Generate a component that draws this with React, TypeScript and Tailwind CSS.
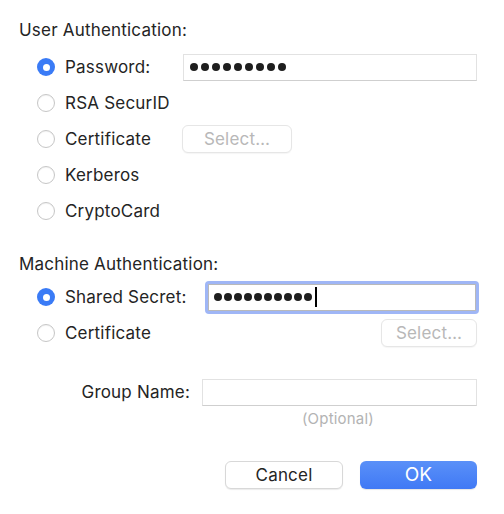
import React from "react";

function Radio({ checked }: { checked?: boolean }) {
  return checked ? (
    <span className="flex h-[18px] w-[18px] shrink-0 items-center justify-center rounded-full bg-[#3a7bf6]">
      <span className="h-[7px] w-[7px] rounded-full bg-white" />
    </span>
  ) : (
    <span className="h-[18px] w-[18px] shrink-0 rounded-full border border-[#c6c6c6] bg-white shadow-[inset_0_1px_1px_rgba(0,0,0,0.05)]" />
  );
}

function Dots({ n, tight }: { n: number; tight?: boolean }) {
  return (
    <span className={"flex items-center " + (tight ? "gap-[2px]" : "gap-[3px]")}>
      {Array.from({ length: n }).map((_, i) => (
        <span key={i} className="h-[8px] w-[8px] rounded-full bg-[#1e1e1e]" />
      ))}
    </span>
  );
}

function SelectBtn({ className = "" }: { className?: string }) {
  return (
    <div
      className={
        "flex h-[28px] items-center justify-center rounded-[6px] border border-[#e6e6e6] bg-white pt-[1px] text-[17px] text-[#b8b8b8] shadow-[0_1px_1px_rgba(0,0,0,0.04)] " +
        className
      }
    >
      Select…
    </div>
  );
}

export default function App() {
  return (
    <div
      className="h-[514px] w-[504px] bg-white text-[17px] tracking-[0.2px] text-[#242424]"
      style={{ fontFamily: "Inter, 'Liberation Sans', sans-serif" }}
    >
      <div className="flex flex-col pl-[19px] pr-[27px] pt-[20px]">
        <div className="h-[20px] leading-[20px]">User Authentication:</div>

        <div className="mt-[9px] flex flex-col pl-[18px]">
          <div className="flex h-[36px] items-center">
            <Radio checked />
            <span className="ml-[10px] w-[118px] pt-[1px]">Password:</span>
            <div className="flex h-[27px] flex-1 items-center border border-[#e2e2e2] border-b-[#cfcfcf] bg-white pl-[6px]">
              <Dots n={9} />
            </div>
          </div>
          <div className="flex h-[36px] items-center">
            <Radio />
            <span className="ml-[10px] pt-[1px]">RSA SecurID</span>
          </div>
          <div className="flex h-[36px] items-center">
            <Radio />
            <span className="ml-[10px] w-[117px] pt-[1px]">Certificate</span>
            <SelectBtn className="w-[110px]" />
          </div>
          <div className="flex h-[36px] items-center">
            <Radio />
            <span className="ml-[10px] pt-[1px]">Kerberos</span>
          </div>
          <div className="flex h-[36px] items-center">
            <Radio />
            <span className="ml-[10px] pt-[1px]">CryptoCard</span>
          </div>
        </div>

        <div className="mt-[25px] h-[20px] leading-[20px]">Machine Authentication:</div>

        <div className="mt-[5px] flex flex-col pl-[18px]">
          <div className="flex h-[36px] items-center">
            <Radio checked />
            <span className="ml-[10px] w-[140px] pt-[1px]">Shared Secret:</span>
            <div className="-mr-[2px] flex h-[33px] flex-1 items-center rounded-[4px] bg-[#9fb6f6] p-[3px]">
              <div className="flex h-full w-full items-center border border-[#b9b9b9] bg-white pl-[5px]">
                <Dots n={10} tight />
                <span className="ml-[3px] h-[20px] w-[1.5px] bg-black" />
              </div>
            </div>
          </div>
          <div className="flex h-[36px] items-center">
            <Radio />
            <span className="ml-[10px] flex-1 pt-[1px]">Certificate</span>
            <SelectBtn className="w-[96px]" />
          </div>
        </div>

        <div className="mt-[23px] flex h-[36px] items-center">
          <span className="w-[183px] pr-[12px] pt-[1px] text-right">Group Name:</span>
          <div className="h-[27px] flex-1 border border-[#e2e2e2] border-b-[#cfcfcf] bg-white" />
        </div>
        <div className="flex justify-end">
          <span className="mr-[103px] text-[15px] leading-[18px] text-[#b3b3b3]">(Optional)</span>
        </div>

        <div className="mt-[33px] flex justify-end gap-[17px]">
          <div className="flex h-[28px] w-[118px] items-center justify-center rounded-[6px] border border-[#d8d8d8] bg-white pt-[1px] shadow-[0_1px_1px_rgba(0,0,0,0.08)]">
            Cancel
          </div>
          <div className="flex h-[28px] w-[117px] items-center justify-center rounded-[6px] bg-gradient-to-b from-[#5a90f8] to-[#4079f5] pt-[1px] text-[19px] text-white shadow-[0_1px_1px_rgba(0,0,0,0.1)]">
            OK
          </div>
        </div>
      </div>
    </div>
  );
}
